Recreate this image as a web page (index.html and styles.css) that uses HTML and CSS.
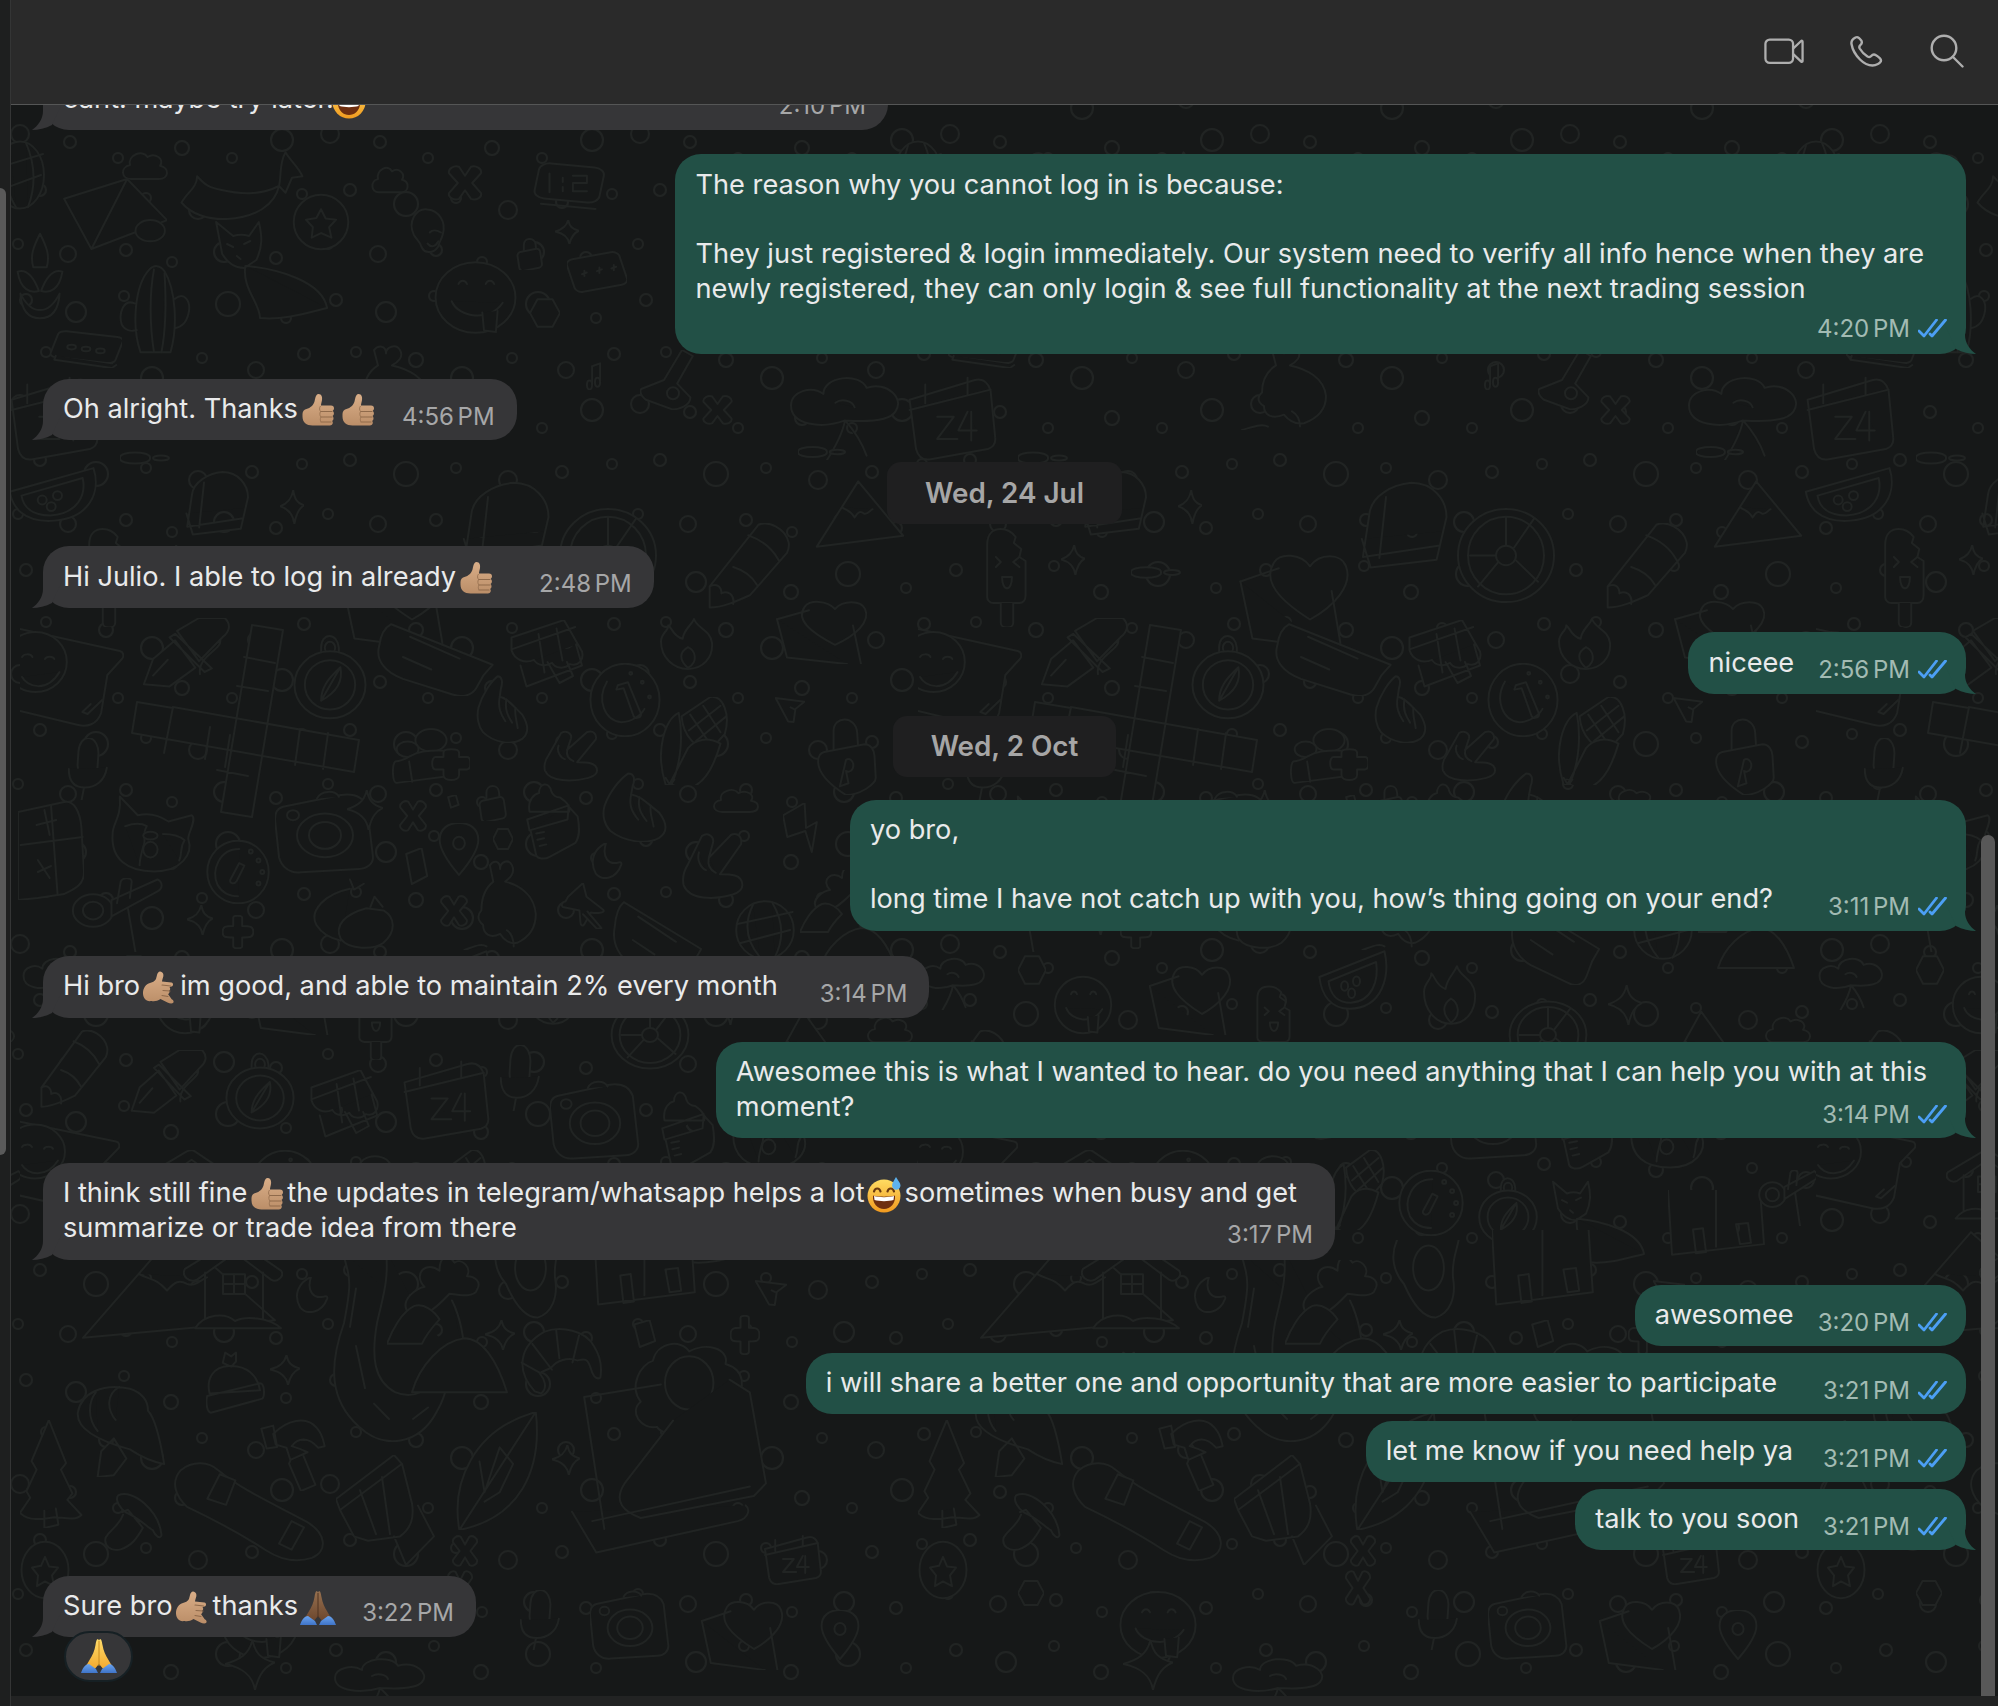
FILE: index.html
```html
<!DOCTYPE html>
<html lang="en">
<head>
<meta charset="utf-8">
<title>Chat</title>
<link rel="stylesheet" href="styles.css">
</head>
<body>
<svg class="defs" width="0" height="0" aria-hidden="true">
  <defs>
    <linearGradient id="skin" x1="0" y1="0" x2="0" y2="1"><stop offset="0" stop-color="#d9ae88"/><stop offset="1" stop-color="#bb8e68"/></linearGradient>
    <linearGradient id="brown" x1="0" y1="0" x2="0" y2="1"><stop offset="0" stop-color="#96704f"/><stop offset="1" stop-color="#6b452c"/></linearGradient>
    <linearGradient id="gold" x1="0" y1="0" x2="0" y2="1"><stop offset="0" stop-color="#ffdc6a"/><stop offset="1" stop-color="#f3a72c"/></linearGradient>
    <linearGradient id="face" x1="0" y1="0" x2="0" y2="1"><stop offset="0" stop-color="#ffdc62"/><stop offset="1" stop-color="#f19a1f"/></linearGradient>
    <linearGradient id="sleeve" x1="0" y1="0" x2="0" y2="1"><stop offset="0" stop-color="#6aa3ee"/><stop offset="1" stop-color="#3f74c8"/></linearGradient>
    <symbol id="e-thumb" viewBox="0 0 33 36">
      <path d="M1 21c0-3 2-4.500 4-5 4-1 7-4 8-7.500.8-2.500.8-7 4-7.500 3 0 4 3 3.500 6-.3 2-1 4-1 5.500h10c2 0 3 1.200 3 2.800 0 1-.5 2-1.300 2.600.8.500 1.200 1.500 1.200 2.500s-.6 2-1.400 2.600c.7.500 1 1.400 1 2.400s-.6 2-1.400 2.500c.5.500.7 1.100.7 1.900 0 1.600-1.300 2.700-3 2.700H11c-6 0-10-3-10-9z" fill="url(#skin)"/>
      <path d="M19 18.500h11.500M19.500 24h11M19.500 29h10" stroke="#8f6a4b" stroke-width="1.100" stroke-linecap="round" fill="none"/>
      <path d="M19 13c-1.500 2-1 4 0 5.500-1 2-.8 4 .5 5.500-1 2-.8 3.500 0 5" stroke="#9c7554" stroke-width="1" fill="none"/>
    </symbol>
    <symbol id="e-shaka" viewBox="0 0 36 36">
      <path d="M1 23c0-5 3-9 7-10 3-.7 5-2 6-4 1-3 1-7 4-7.500 3 .3 4 3 3 6-.4 1.500-1 3-1 4l9.500 1c2 .5 2 3.500 0 4l-2 .5c1 1 1 3-.5 3.500 1 1 .5 3-1 3.500l3.500 5c1.500 1 3 2.500 1.500 4-1 .7-3.500.5-5.500-.5l-7-3.500c-3 2-6 2.500-9 2C4 32 1 28 1 23z" fill="url(#skin)"/>
      <path d="M20 15l8.500 1M21 20.500l7 .5M20 25.500l6 1" stroke="#8f6a4b" stroke-width="1.100" stroke-linecap="round" fill="none"/>
    </symbol>
    <symbol id="e-sweat" viewBox="0 0 36 36">
      <circle cx="17" cy="19" r="16.500" fill="url(#face)"/>
      <path d="M6 18.500c3 1.500 19 1.500 22 0 .7 8-4.500 13.500-11 13.500S5.300 26.500 6 18.500z" fill="#6e2f10"/>
      <path d="M7 19c4 1.500 16 1.500 20 0l-.5 4c-5 1.500-14 1.500-19 0z" fill="#fff"/>
      <path d="M7 14.500c1-4 5.500-4 6.500 0M20.500 14.500c1-4 5.500-4 6.500 0" stroke="#6b3a10" stroke-width="2.200" fill="none" stroke-linecap="round"/>
      <path d="M29 0c2 3.500 4.500 6 4.500 8.500a4.200 4.200 0 0 1-8.400 0c0-2.500 1.900-5 3.900-8.500z" fill="#5db2ee"/>
    </symbol>
    <symbol id="e-pray-brown" viewBox="0 0 36 36">
      <path d="M17 1c-1.500 0-2 3-2.500 6-1 6-3 10-6 15l-3.500 6 8 4 4.500-5.500h1L23 32l8-4-3.500-6c-3-5-5-9-6-15-.5-3-1-6-2.500-6l-1 1.500z" fill="url(#brown)"/>
      <path d="M18 3v25" stroke="#4f3320" stroke-width="1"/>
      <path d="M0 35c2-6 5-9 8-9l7 5 2 4zM36 35c-2-6-5-9-8-9l-7 5-2 4z" fill="url(#sleeve)"/>
    </symbol>
    <symbol id="e-pray-gold" viewBox="0 0 36 36">
      <path d="M17 1c-1.500 0-2 3-2.500 6-1 6-3 10-6 15l-3.500 6 8 4 4.500-5.500h1L23 32l8-4-3.500-6c-3-5-5-9-6-15-.5-3-1-6-2.500-6l-1 1.500z" fill="url(#gold)"/>
      <path d="M18 3v25" stroke="#c98a20" stroke-width="1"/>
      <path d="M0 35c2-6 5-9 8-9l7 5 2 4zM36 35c-2-6-5-9-8-9l-7 5-2 4z" fill="url(#sleeve)"/>
    </symbol>
    <symbol id="ticks" viewBox="0 0 29 19">
      <path d="M1 12l5 5L18.500 1M12 15l2 2L27.500 1" fill="none" stroke="#4c9ff5" stroke-width="2.800" stroke-linecap="round" stroke-linejoin="round"/>
    </symbol>

    <pattern id="rings" patternUnits="userSpaceOnUse" width="310" height="270" x="6" y="12">
      <circle cx="20" cy="18" r="6"/><circle cx="70" cy="30" r="10"/><circle cx="118" cy="14" r="5"/><circle cx="165" cy="40" r="7"/><circle cx="222" cy="22" r="12"/><circle cx="280" cy="36" r="5"/>
      <circle cx="40" cy="70" r="5"/><circle cx="100" cy="78" r="7"/><circle cx="146" cy="96" r="11"/><circle cx="196" cy="76" r="5"/><circle cx="250" cy="88" r="8"/><circle cx="298" cy="72" r="6"/>
      <circle cx="14" cy="122" r="9"/><circle cx="64" cy="130" r="6"/><circle cx="112" cy="146" r="5"/><circle cx="176" cy="136" r="7"/><circle cx="226" cy="146" r="5"/><circle cx="276" cy="128" r="11"/>
      <circle cx="34" cy="178" r="6"/><circle cx="90" cy="192" r="12"/><circle cx="140" cy="186" r="5"/><circle cx="192" cy="198" r="9"/><circle cx="246" cy="190" r="6"/><circle cx="296" cy="182" r="5"/>
      <circle cx="12" cy="232" r="5"/><circle cx="62" cy="242" r="8"/><circle cx="120" cy="238" r="6"/><circle cx="166" cy="250" r="5"/><circle cx="218" cy="240" r="10"/><circle cx="270" cy="246" r="6"/>
    </pattern>

    <!-- wallpaper doodles -->
    <symbol id="d-globe" viewBox="0 0 100 100" preserveAspectRatio="none"><circle cx="50" cy="50" r="48"/><path d="M4 40l92-20M8 72l84-22M30 8c-15 30-12 60 12 88M62 4c18 30 20 62 4 92"/></symbol>
    <symbol id="d-cloud" viewBox="0 0 100 100" preserveAspectRatio="none"><path d="M22 85C2 85 0 55 20 50 15 25 45 10 55 30c15-12 35 5 25 22 20 5 18 33-2 33z"/></symbol>
    <symbol id="d-whale" viewBox="0 0 100 100" preserveAspectRatio="none"><path d="M5 70c5-15 12-20 12-35 6 12 10 15 18 18 15 6 30 8 45-5-3 25-18 42-40 44C25 93 12 85 5 70zM80 48c2-15 0-30 5-45 4 12 10 20 13 32l-8 2-5 20z"/></symbol>
    <symbol id="d-clock" viewBox="0 0 100 100" preserveAspectRatio="none"><rect x="8" y="14" width="84" height="68" rx="14" transform="rotate(8 50 50)"/><path d="M25 30v36M42 38v8M42 56v8M55 34h18v14H55v16h18" /><path d="M14 88l70 10"/></symbol>
    <symbol id="d-mega" viewBox="0 0 100 100" preserveAspectRatio="none"><path d="M2 30l60-26 38 54-72 38zM62 4L28 96"/><ellipse cx="84" cy="72" rx="14" ry="14"/></symbol>
    <symbol id="d-starcircle" viewBox="0 0 100 100" preserveAspectRatio="none"><circle cx="50" cy="50" r="47"/><path d="M50 28l8 16 18 2-12 13 4 18-18-8-16 8 2-18-12-13 18-3z"/></symbol>
    <symbol id="d-man" viewBox="0 0 100 100" preserveAspectRatio="none"><path d="M20 55C5 30 25 5 50 8c25 2 42 22 34 45-3 10-8 14-10 22-8 12-30 16-38 0-2-8-10-12-16-20z"/><path d="M55 50c5-5 15-5 25 0M50 70c8 8 18 6 24-4"/></symbol>
    <symbol id="d-fox" viewBox="0 0 100 100" preserveAspectRatio="none"><path d="M5 2l14 14c5-2 8-2 13 0L40 2c3 15 3 25-2 38l-10 8c-8 0-14-6-18-14zM30 46c25 3 62 15 66 42M96 88c-20 6-35 12-55 10 0-15-15-30-12-52"/><path d="M14 24l5 3M28 24l5-3M22 36l3 3"/></symbol>
    <symbol id="d-smile" viewBox="0 0 100 100" preserveAspectRatio="none"><circle cx="50" cy="50" r="47"/><path d="M30 32c2-6 8-6 10 0M62 32c2-6 8-6 10 0M22 55c8 22 45 28 60 2"/><path d="M58 70l2 24 14 2 2-28"/></symbol>
    <symbol id="d-cactus" viewBox="0 0 100 100" preserveAspectRatio="none"><path d="M30 98C18 70 22 25 42 8c6-5 14-5 20 2 15 20 18 60 8 88zM22 45C8 40 0 55 5 68c4 6 12 8 20 6M76 40c12-8 22 2 18 16-3 10-8 14-18 16"/><path d="M48 8c-6 25-6 60 0 90M62 12c2 25 2 60-4 86"/></symbol>
    <symbol id="d-candle" viewBox="0 0 100 100" preserveAspectRatio="none"><path d="M50 2c12 15 18 25 12 38H38c-6-13 0-23 12-38zM10 45c15-3 28 5 38 22C32 70 15 65 10 45zM90 45c-15-3-28 5-38 22 16 3 33-2 38-22zM15 70c20 25 50 25 70 0-2 20-15 28-35 28S17 90 15 70z"/></symbol>
    <symbol id="d-stars" viewBox="0 0 100 100" preserveAspectRatio="none"><rect x="5" y="12" width="90" height="76" rx="12" transform="rotate(-14 50 50)"/><path d="M25 55l8-4M29 47l0 12M50 48l8-4M54 40l0 12M74 42l8-4M78 34l0 12"/></symbol>
    <symbol id="d-dots" viewBox="0 0 100 100" preserveAspectRatio="none"><rect x="4" y="10" width="92" height="70" rx="10" transform="rotate(12 50 50)"/><circle cx="30" cy="45" r="6"/><circle cx="50" cy="50" r="6"/><circle cx="70" cy="55" r="6"/><path d="M8 68l-2 10 80 22 6-8"/></symbol>
    <symbol id="d-star" viewBox="0 0 100 100" preserveAspectRatio="none"><path d="M55 0c5 25 15 38 45 45-20 8-32 22-40 55C55 70 35 55 0 48 30 40 48 28 55 0z"/></symbol>
    <symbol id="d-lock" viewBox="0 0 100 100" preserveAspectRatio="none"><path d="M28 38V22c0-25 40-25 42-2l2 18"/><rect x="8" y="38" width="82" height="60" rx="12" transform="rotate(-10 50 68)"/></symbol>
    <symbol id="d-bigLock" viewBox="0 0 100 100" preserveAspectRatio="none"><path d="M30 42V18c0-20 36-20 38 2l2 24"/><path d="M15 45L80 35c10 0 16 8 16 15l2 28c0 8-25 22-48 22C30 90 6 75 5 58c0-6 3-12 10-13z"/><path d="M50 55a8 8 0 1 1 0 14l4 16-14 4z"/></symbol>
    <symbol id="d-flower" viewBox="0 0 100 100" preserveAspectRatio="none"><path d="M50 55C30 65 5 60 5 38 5 22 22 15 32 25 32 5 62 0 68 18 85 10 100 30 92 45c-5 10-22 12-42 10zM50 55c-2 15-8 30-15 45M50 55c8 12 14 25 18 40"/><path d="M42 35c5-5 14-3 16 5"/></symbol>
    <symbol id="d-calendar" viewBox="0 0 100 100" preserveAspectRatio="none"><path d="M5 28L75 5c10-3 15 2 18 12l5 55c1 8-3 12-8 14l-62 12c-10 2-14-4-16-12z"/><path d="M22 10v22M68 2v20M5 40l88-24M35 48h18l-18 26h22M68 42l-10 22h20M72 42v34"/></symbol>
    <symbol id="d-note" viewBox="0 0 100 100" preserveAspectRatio="none"><circle cx="22" cy="82" r="16"/><path d="M38 82V15l50-10v65"/><circle cx="72" cy="72" r="16"/></symbol>
    <symbol id="d-x" viewBox="0 0 100 100" preserveAspectRatio="none"><path d="M35 5l15 25L65 5c12-5 28 5 25 18L68 50l22 28c3 12-12 22-25 16L50 70 35 94c-12 6-28-4-25-16l22-28L10 23C7 10 23 0 35 5z"/></symbol>
    <symbol id="d-plus" viewBox="0 0 100 100" preserveAspectRatio="none"><path d="M35 8c0-8 28-8 28 0v24c25 0 35 2 35 18s-10 16-35 16v26c0 8-28 8-28 0V66C10 66 2 66 2 50s8-18 33-18z"/></symbol>
    <symbol id="d-mountain" viewBox="0 0 100 100" preserveAspectRatio="none"><path d="M2 98L48 2l50 80zM30 40c6 6 8 3 14 15 4-8 6-10 10-6 4 3 6-3 10-6"/></symbol>
    <symbol id="d-pop" viewBox="0 0 100 100" preserveAspectRatio="none"><path d="M18 68V18C18 5 30 2 40 2c12 0 18 3 24 8l-3 6 12 6-3 8 10 4v34c0 5-4 8-10 8H28c-6 0-10-3-10-6z"/><path d="M40 76v20c0 6 20 6 20 0V76M32 30l8 5-8 5M70 30l-10 5 10 5M42 50c0 15 16 15 16 0z"/></symbol>
    <symbol id="d-wheel" viewBox="0 0 100 100" preserveAspectRatio="none"><ellipse cx="50" cy="50" rx="48" ry="48"/><ellipse cx="50" cy="50" rx="38" ry="40"/><circle cx="50" cy="50" r="10"/><path d="M50 10v30M14 50h26M60 55l22 22M42 57L22 82M58 42l20-30"/></symbol>
    <symbol id="d-pencil" viewBox="0 0 100 100" preserveAspectRatio="none"><path d="M2 96V72L60 2c12-5 32 4 36 20 1 5 0 8-2 12L50 82c-14 6-32 14-48 14zM2 72c8-4 14 0 14 8 8-4 16 2 14 12M48 14c15 5 28 14 36 28M30 50c10 3 22 10 28 20"/></symbol>
    <symbol id="d-heartnote" viewBox="0 0 100 100" preserveAspectRatio="none"><path d="M2 30l32-14M60 70c-25-20-40-40-30-60 5-10 22-10 30 4 8-14 26-14 30 0 6 20-10 42-30 56z"/><path d="M2 30l10 60 60 10M78 40l8 60"/></symbol>
    <symbol id="d-melon" viewBox="0 0 100 100" preserveAspectRatio="none"><path d="M2 45L95 2c8 40-2 95-50 96C18 98 5 75 2 45z"/><path d="M15 52l68-32c4 30-5 65-36 68-20 0-30-15-32-36z"/><ellipse cx="38" cy="60" rx="5" ry="8"/><ellipse cx="55" cy="52" rx="5" ry="8"/><ellipse cx="48" cy="72" rx="5" ry="8"/></symbol>
    <symbol id="d-nib" viewBox="0 0 100 100" preserveAspectRatio="none"><path d="M2 92l10-35 24-26 22 38-28 26zM12 80l16-22M30 27l38 48 8-5-40-48zM38 18L62 0h28c8 10 4 20-2 26L62 60zM85 30c3 14-25 22-22 48"/></symbol>
    <symbol id="d-tablet" viewBox="0 0 100 100" preserveAspectRatio="none"><path d="M0 2l96 22c4 1 4 6 2 8L84 48l-6 38c-4 12-14 14-22 12L0 84"/><circle cx="15" cy="35" r="30"/><path d="M2 30c1-3 8-4 10 0M24 32c1-3 8-3 9 0M2 50c5 10 24 16 36-5M60 85l8-8M60 85l5 2 14-14"/></symbol>
    <symbol id="d-compass" viewBox="0 0 100 100" preserveAspectRatio="none"><path d="M38 28V18c0-18 22-18 24 0v10"/><ellipse cx="50" cy="18" rx="7" ry="7"/><ellipse cx="50" cy="60" rx="48" ry="38"/><ellipse cx="50" cy="60" rx="34" ry="28"/><path d="M38 78c0-14 8-24 26-38 4 16-4 28-26 38zM38 78l26-38"/></symbol>
    <symbol id="d-notepad" viewBox="0 0 100 100" preserveAspectRatio="none"><path d="M12 8L98 60l-8 14-6 16c-4 10-12 12-20 8L22 78C8 70-2 55 2 35c1-12 4-22 10-27zM28 24l42 28M22 50l24 16"/></symbol>
    <symbol id="d-shop" viewBox="0 0 100 100" preserveAspectRatio="none"><path d="M2 25L72 0l24 45c3 12-5 22-16 18-8 8-20 6-24-2-8 6-20 4-24-4-12 6-26 0-30-14zM14 65l8 30 74-30-8-30M38 20l8 55M62 12l8 46M2 42l85-32M50 60l16 30 18-10-8-20"/></symbol>
    <symbol id="d-flame" viewBox="0 0 100 100" preserveAspectRatio="none"><path d="M10 45c0 30 20 53 45 53s42-22 40-50C92 22 70 20 65 2 60 15 48 22 46 40 30 35 28 18 22 14c2 10-12 14-12 31z"/><path d="M55 96c-15-15-15-30 0-40 12 6 18 28 0 40z"/></symbol>
    <symbol id="d-coin" viewBox="0 0 100 100" preserveAspectRatio="none"><ellipse cx="50" cy="50" rx="48" ry="49"/><path d="M25 25C10 50 22 78 45 80c14 0 28-10 32-18M40 30l14-4 18 42c2 6-8 8-10 4L48 34l-10 2z"/><circle cx="58" cy="14" r="2"/><circle cx="74" cy="26" r="2"/><circle cx="84" cy="46" r="2"/></symbol>
    <symbol id="d-corn" viewBox="0 0 100 100" preserveAspectRatio="none"><path d="M30 22l40-22c18-2 28 20 20 42L70 60c-18 0-38-15-40-38zM42 20l28 34M60 10l24 30M40 38L84 10M50 50L92 22"/><path d="M8 100C-8 60 8 25 26 18c6 25 4 55-10 82zM14 98c20 10 50 12 70-45-18-8-35-5-45 5zM8 92l6 8 6-6"/></symbol>
    <symbol id="d-thumb" viewBox="0 0 100 100" preserveAspectRatio="none"><path d="M8 48C15 28 30 10 42 2c8 0 10 8 6 18l-2 12c14 2 24 14 40 26 12 16 12 28 0 36-18 10-50 6-70-10C8 76 4 62 8 48z"/><path d="M46 32c-4 16 2 26 10 36M58 36c-4 16 4 26 10 34M74 48c-2 10 2 18 4 30"/></symbol>
    <symbol id="d-rock" viewBox="0 0 100 100" preserveAspectRatio="none"><path d="M14 48L34 6c8-6 18 0 16 10l-6 22 32-34c10-4 16 4 14 14L60 62c14 0 32 0 32 16 0 8-8 12-14 14-26 8-62 8-70-14-2-10 0-20 6-30z"/><path d="M30 30c-4 12 4 24 10 26M44 38c-2 10 2 18 10 22"/></symbol>
    <symbol id="d-people" viewBox="0 0 100 100" preserveAspectRatio="none"><circle cx="50" cy="22" r="20"/><circle cx="20" cy="38" r="14"/><path d="M4 60c16-2 18-14 36-18 18-3 40-2 44 4v38L6 98C0 98 0 66 4 60zM22 60l4 36"/><path d="M66 44c0-8 20-8 20 0v8h10c6 0 6 22 0 22H86v10c0 12-20 12-20 0V74H56c-6 0-6-22 0-22h10z"/></symbol>
    <symbol id="d-mic" viewBox="0 0 100 100" preserveAspectRatio="none"><rect x="25" y="0" width="50" height="68" rx="24" transform="rotate(6 50 34)"/><path d="M2 50c0 20 15 30 40 30 25 0 50-10 55-32M40 80l-6 20"/></symbol>
    <symbol id="d-calc" viewBox="0 0 100 100" preserveAspectRatio="none"><path d="M0 12L70 2c15-2 24 10 26 25l4 45c0 15-20 18-30 22L30 98 0 100z"/><path d="M4 45l94-8M50 5l10 90M28 25l30-5M40 10l8 25M30 72l20-6M30 60l18 18"/></symbol>
    <symbol id="d-cat" viewBox="0 0 100 100" preserveAspectRatio="none"><path d="M12 2l20 24c14-4 24 0 34 8l26-8c6 5-4 22-4 30 6 20-8 42-38 42C20 98 2 82 4 50c0-15 10-20 8-48z"/><path d="M18 40c10-4 18-4 24 0-6 10 0 18-4 26-2 10-4 16-4 24M60 50c10 0 18 2 24 8-6 10-2 16-6 26"/><ellipse cx="46" cy="52" rx="8" ry="5"/><ellipse cx="46" cy="70" rx="8" ry="10"/></symbol>
    <symbol id="d-camera" viewBox="0 0 100 100" preserveAspectRatio="none"><path d="M8 20L66 6c12-2 22 2 26 14l6 60c0 8-6 14-14 14L26 98C14 100 6 90 4 80L0 35c0-8 2-13 8-15z"/><ellipse cx="50" cy="54" rx="28" ry="26"/><ellipse cx="50" cy="54" rx="16" ry="16"/><circle cx="18" cy="30" r="6"/><path d="M42 10c4-10 18-10 22-2"/></symbol>
    <symbol id="d-gauge" viewBox="0 0 100 100" preserveAspectRatio="none"><ellipse cx="50" cy="50" rx="48" ry="49"/><path d="M52 14C20 14 8 48 18 70c8 14 22 18 32 18M52 36l-14 26c-2 6 6 8 10 2l12-24z"/><circle cx="70" cy="18" r="3"/><circle cx="82" cy="32" r="3"/><circle cx="88" cy="50" r="3"/><circle cx="82" cy="68" r="3"/></symbol>
    <symbol id="d-pin" viewBox="0 0 100 100" preserveAspectRatio="none"><path d="M50 98C20 70 4 50 4 32 4 10 25 0 50 0s46 10 46 32c0 18-16 38-46 66z"/><ellipse cx="50" cy="38" rx="14" ry="12"/></symbol>
    <symbol id="d-bottle" viewBox="0 0 100 100" preserveAspectRatio="none"><path d="M8 38C4 22 18 15 25 14c0-12 18-16 22-2 2 4 8 8 16 8 10 5 18 10 16 18zM4 48l74-18-2 18L8 62zM10 62l10 32c2 4 14 6 24 2l46-18c8-8 8-18 4-34l-18-14"/><path d="M20 66l14-2M22 74l12-2M26 82l12-2"/></symbol>
    <symbol id="d-moon" viewBox="0 0 100 100" preserveAspectRatio="none"><path d="M50 0C15 15 0 50 20 85c20 22 60 15 75-25 2-6-4-8-8-6-30 8-50-15-37-54z"/></symbol>
    <symbol id="d-plane" viewBox="0 0 100 100" preserveAspectRatio="none"><path d="M2 4l96 14-30 28-6 50-18-2zM62 46l-10-6"/></symbol>
    <symbol id="d-bolt" viewBox="0 0 100 100" preserveAspectRatio="none"><path d="M0 25L60 0l4 50 30-12-14 60-18-42-50 12z"/></symbol>
    <symbol id="d-dumpling" viewBox="0 0 100 100" preserveAspectRatio="none"><path d="M45 15C15 22-5 45 4 65c8 15 22 20 30 22"/><path d="M65 42C40 50 25 65 34 85c10 15 40 15 52 5 15-15 15-35 0-45zM45 2l5 14 12-8M70 40l5-14 10 14"/></symbol>
    <symbol id="d-girl" viewBox="0 0 100 100" preserveAspectRatio="none"><path d="M34 6c4-6 12-6 12 4 0-8 10-12 14-4 4 8-2 14-8 18 16 4 34 14 36 36 0 16-8 26-22 32-10 2-16-4-20-10-12 6-20 0-20-10-8-6-6-12-2-16 0-16 6-26 14-32zM30 96c-6-4-14 0-26 4M62 96c0-8-2-14-8-18"/></symbol>
    <symbol id="d-pushpin" viewBox="0 0 100 100" preserveAspectRatio="none"><path d="M50 0l8 30 38 28c6 8-16 8-28 6l-14 24c-4 8-10 4-10-4l-2-24-38-8c-6-6 2-12 6-12l6-10z"/><path d="M60 62l32 36-10 2-32-32"/></symbol>
    <symbol id="d-key" viewBox="0 0 100 100" preserveAspectRatio="none"><ellipse cx="24" cy="44" rx="22" ry="22"/><ellipse cx="24" cy="44" rx="11" ry="12"/><path d="M44 30L94 2c6 4 6 12 0 16L44 52zM50 34L54 5c2-6 12-6 12 0l-2 22M62 42l8 58"/></symbol>
    <symbol id="d-house" viewBox="0 0 100 100" preserveAspectRatio="none"><path d="M2 32L46 2c4-2 8-2 10 0l42 32c4 6-4 14-10 10L52 14 14 44C6 48-2 40 2 32zM22 36v52M80 36v52M12 98c10-16 30-18 40-8 10-6 34-4 46 8z"/><rect x="40" y="38" width="22" height="22"/><path d="M51 38v22M40 49h22"/></symbol>
    <symbol id="d-road" viewBox="0 0 100 100" preserveAspectRatio="none"><path d="M8 0c8 14 6 22 2 38C0 60 0 78 20 92c16 12 40 10 52-8 6-8 10-20 8-34M38 0c2 16-2 24-6 38-4 18-2 30 12 36 12 4 24 0 34-14M18 20l-4 20M18 50l6 22M30 80l10 8M56 88l10-6"/></symbol>
    <symbol id="d-island" viewBox="0 0 100 100" preserveAspectRatio="none"><path d="M50 25C40 35 28 45 18 40 8 30 25 20 30 20 20 10 32 0 42 8c0-10 6-14 12-6 6-4 14 4 10 10 6 0 12 4 8 10-2 6-14 4-22 3zM52 30c8 15 10 30 10 45"/><path d="M0 62c4-10 12-24 22-28 8-2 16 4 20 10-8 8-12 14-14 18zM20 98c6-20 24-38 42-40 14 0 26 16 34 40z"/></symbol>
    <symbol id="d-egg" viewBox="0 0 100 100" preserveAspectRatio="none"><path d="M10 0C0 20 5 40 20 55c10 20 25 42 45 42 20-5 30-25 25-50C88 25 95 15 98 0"/><ellipse cx="55" cy="35" rx="22" ry="28"/></symbol>
    <symbol id="d-building" viewBox="0 0 100 100" preserveAspectRatio="none"><path d="M0 0l4 98 92-16L92 0M25 60l10-2 3 36-10 2zM48 0v86M68 52l12-2 3 30-11 2z"/></symbol>
    <symbol id="d-croissant" viewBox="0 0 100 100" preserveAspectRatio="none"><path d="M18 88C-5 60-2 25 30 5c20-8 50-2 60 20 8 14 10 30 8 44-6 4-10-5-12-14-4-14-8-12-16-10C58 40 45 45 38 55c-6 4-12 5-14 8 6 8 10 20 2 28z"/><path d="M15 22l24 36M44 2l4 40M72 10L64 48M2 48l22 14"/></symbol>
    <symbol id="d-hat" viewBox="0 0 100 100" preserveAspectRatio="none"><path d="M32 4l10 6 8-6v14l-8 8-14-6zM6 68C0 45 12 26 38 25c30-2 48 15 52 38zM2 72l88-20c8 0 8 20 4 24L8 98C0 96 0 78 2 72z"/></symbol>
    <symbol id="d-shrimp" viewBox="0 0 100 100" preserveAspectRatio="none"><path d="M60 70C30 62 0 50 2 30 6 8 30-2 60 4c18 6 20 18 20 24 8 8 14 34 18 58-20-4-32-12-38-16zM28 72l-4 28 18-2 14-18-14-22zM22 8c-8 10-10 28 2 42M48 2c-14 8-14 24-4 36"/></symbol>
    <symbol id="d-tree" viewBox="0 0 100 100" preserveAspectRatio="none"><path d="M45 0L72 40l-8 6 18 22-8 6 22 14c-10 6-30 2-42 2-20 2-40 4-54-4l16-14-6-6 16-20-8-8zM38 84v16l22-3-4-15"/></symbol>
    <symbol id="d-hammer" viewBox="0 0 100 100" preserveAspectRatio="none"><path d="M2 18l18-4 6 28-16 2zM20 25c20-18 50-25 66-8 10 10 10 18 12 24l-10 2c-14-14-30-14-40-2 8 2 14 4 24 8l-26 10-6-16-16-4zM46 60l-2 4 18 36 22-8-18-38"/></symbol>
    <symbol id="d-snow" viewBox="0 0 100 100" preserveAspectRatio="none"><path d="M5 8c8-10 18-8 24 0 16 20 34 32 56 50 14 12 14 30 4 36-12 6-22 0-30-8-16-16-28-26-50-42C2 34-2 20 5 8z"/><path d="M22 36l12 6 6-24-10-6zM68 80l8 6 8-22-8-6z"/></symbol>
    <symbol id="d-mushroom" viewBox="0 0 100 100" preserveAspectRatio="none"><path d="M26 4C50-8 92 30 96 70c-2 8-10 2-14-8-8-4-24-22-44-30-8-6-18-20-12-28zM32 32l10-4 24 30c-10 18-18 30-36 36-15 4-28-6-24-20 10-16 22-20 28-38"/></symbol>
    <symbol id="d-drum" viewBox="0 0 100 100" preserveAspectRatio="none"><path d="M0 40L58 0l8 8L4 50zM4 50l14 24 14 4 32-4c12-8 14-18 12-30L66 8M24 32l16 40M46 20l8 52M58 74l12 26 28-26-16-28"/></symbol>
    <symbol id="d-surf" viewBox="0 0 100 100" preserveAspectRatio="none"><path d="M4 100C-6 60 20 15 95 0c8 50-20 90-91 100zM4 100L95 0M28 42l6 26 18-38 16 14-16 24-18 8"/></symbol>
    <symbol id="d-woman" viewBox="0 0 100 140" preserveAspectRatio="none"><path d="M42 12c2-12 14-14 18-6 8-6 20-2 18 8 10 4 10 16 4 22 8 8 2 20-6 18-4 8-28 8-32 0-8 2-14-10-8-16-6-10 0-24 6-26z"/><ellipse cx="60" cy="26" rx="12" ry="17"/><path d="M8 35l38-8M8 35l10 84M52 50l-24 40c-6 12 0 18 8 22l56-14 6-8-8-58-10-8M90 92l-78 22M2 108l12 26 70-20c6-2 6-8 4-10"/></symbol>
    <symbol id="d-backpack" viewBox="0 0 100 100" preserveAspectRatio="none"><path d="M15 35c2-18 20-30 38-32 20 0 32 18 32 36l-6 30-70 12zM8 62l8 30 60-8 6-30M30 18L24 82"/></symbol>
    <symbol id="d-flask" viewBox="0 0 100 100" preserveAspectRatio="none"><path d="M70 0L40 50 2 65c-4 5 2 14 8 18l44 16c10 0 30-6 30-20L62 56l26-46z"/><circle cx="55" cy="72" r="10"/></symbol>
    <symbol id="d-dash" viewBox="0 0 100 100" preserveAspectRatio="none"><rect x="0" y="15" width="60" height="70" rx="30"/><circle cx="82" cy="50" r="16"/></symbol>
    <symbol id="d-hex" viewBox="0 0 100 100" preserveAspectRatio="none"><path d="M25 4h50l25 46-25 46H25L0 50z"/></symbol>
    <symbol id="d-diamond" viewBox="0 0 100 100" preserveAspectRatio="none"><path d="M15 15L70 0l20 70-55 20z"/></symbol>

    <g id="wall-tile">
      <use href="#d-globe" x="-5" y="140" width="50" height="70"/>
      <use href="#d-cloud" x="120" y="145" width="50" height="40"/>
      <use href="#d-whale" x="175" y="150" width="130" height="75"/>
      <use href="#d-x" x="445" y="165" width="40" height="36"/>
      <use href="#d-clock" x="530" y="158" width="78" height="52"/>
      <use href="#d-cloud" x="370" y="160" width="40" height="38"/>
      <use href="#d-mega" x="62" y="176" width="105" height="76"/>
      <use href="#d-starcircle" x="292" y="193" width="58" height="58"/>
      <use href="#d-star" x="555" y="220" width="24" height="24"/>
      <use href="#d-lock" x="516" y="238" width="28" height="32"/>
      <use href="#d-stars" x="567" y="250" width="60" height="44"/>
      <use href="#d-fox" x="210" y="220" width="122" height="100"/>
      <use href="#d-man" x="405" y="205" width="45" height="55"/>
      <use href="#d-smile" x="433" y="260" width="85" height="75"/>
      <use href="#d-cactus" x="118" y="262" width="75" height="92"/>
      <use href="#d-candle" x="12" y="232" width="56" height="88"/>
      <use href="#d-hex" x="530" y="298" width="30" height="30"/>
      <use href="#d-dots" x="50" y="330" width="72" height="38"/>
      <use href="#d-girl" x="340" y="345" width="100" height="85"/>
      <use href="#d-note" x="586" y="362" width="16" height="28"/>
      <use href="#d-x" x="700" y="395" width="35" height="30"/>
      <use href="#d-flower" x="785" y="372" width="120" height="88"/>
      <use href="#d-calendar" x="905" y="376" width="92" height="85"/>
      <use href="#d-flask" x="640" y="350" width="60" height="60"/>
      <use href="#d-melon" x="8" y="467" width="90" height="55"/>
      <use href="#d-backpack" x="180" y="470" width="80" height="70"/>
      <use href="#d-dash" x="120" y="450" width="50" height="16"/>
      <use href="#d-pop" x="78" y="527" width="62" height="100"/>
      <use href="#d-star" x="163" y="545" width="24" height="30"/>
      <use href="#d-star" x="280" y="490" width="24" height="34"/>
      <use href="#d-heartnote" x="340" y="553" width="120" height="95"/>
      <use href="#d-wheel" x="558" y="507" width="100" height="97"/>
      <use href="#d-backpack" x="455" y="480" width="110" height="95"/>
      <use href="#d-pencil" x="708" y="523" width="84" height="88"/>
      <use href="#d-mountain" x="815" y="480" width="90" height="68"/>
      <use href="#d-dash" x="798" y="445" width="48" height="14"/>
      <use href="#d-dash" x="233" y="565" width="50" height="15"/>
      <use href="#d-tablet" x="20" y="627" width="104" height="100"/>
      <use href="#d-nib" x="142" y="618" width="92" height="72"/>
      <use href="#d-compass" x="293" y="632" width="74" height="88"/>
      <use href="#d-notepad" x="377" y="618" width="118" height="78"/>
      <use href="#d-shop" x="510" y="620" width="75" height="70"/>
      <use href="#d-flame" x="655" y="618" width="60" height="52"/>
      <use href="#d-heartnote" x="775" y="600" width="100" height="64"/>
      <path class="d-line" d="M252 625l31 5-31 187-31-5zM173 707l186 33-5 32-222-39 5-31 36 6M244 657l31 6M237 686l31 5M210 727l-5 32M173 707l-9 46M217 770l31 6M300 729l-5 36M328 733l-5 36M230 735l-5 32"/>
      <use href="#d-thumb" x="474" y="675" width="56" height="68"/>
      <use href="#d-coin" x="589" y="663" width="72" height="74"/>
      <use href="#d-corn" x="660" y="697" width="72" height="88"/>
      <use href="#d-plane" x="775" y="697" width="30" height="26"/>
      <use href="#d-people" x="392" y="728" width="78" height="56"/>
      <use href="#d-rock" x="540" y="730" width="62" height="52"/>
      <use href="#d-mic" x="68" y="738" width="40" height="62"/>
      <use href="#d-bigLock" x="815" y="717" width="62" height="78"/>
      <use href="#d-cloud" x="711" y="783" width="50" height="34"/>
      <use href="#d-calc" x="18" y="800" width="66" height="100"/>
      <use href="#d-cat" x="109" y="795" width="90" height="78"/>
      <use href="#d-camera" x="275" y="790" width="100" height="84"/>
      <use href="#d-star" x="347" y="790" width="36" height="40"/>
      <use href="#d-x" x="397" y="800" width="32" height="32"/>
      <use href="#d-diamond" x="446" y="795" width="14" height="14"/>
      <use href="#d-lock" x="478" y="785" width="30" height="36"/>
      <use href="#d-bottle" x="525" y="782" width="56" height="78"/>
      <use href="#d-thumb" x="599" y="772" width="70" height="70"/>
      <use href="#d-bolt" x="783" y="803" width="36" height="50"/>
      <use href="#d-pin" x="438" y="823" width="42" height="53"/>
      <use href="#d-hex" x="493" y="828" width="20" height="22"/>
      <use href="#d-diamond" x="402" y="848" width="28" height="40"/>
      <use href="#d-gauge" x="206" y="840" width="64" height="64"/>
      <use href="#d-moon" x="589" y="843" width="34" height="36"/>
      <use href="#d-rock" x="678" y="832" width="70" height="68"/>
      <use href="#d-island" x="800" y="870" width="100" height="100"/>
      <use href="#d-key" x="71" y="878" width="92" height="74"/>
      <use href="#d-dumpling" x="313" y="878" width="82" height="72"/>
      <use href="#d-girl" x="461" y="860" width="85" height="90"/>
      <use href="#d-pushpin" x="561" y="883" width="44" height="46"/>
      <use href="#d-x" x="438" y="895" width="32" height="32"/>
      <use href="#d-star" x="187" y="905" width="26" height="30"/>
      <use href="#d-plus" x="222" y="915" width="32" height="34"/>
      <use href="#d-notepad" x="613" y="895" width="90" height="90"/>
      <use href="#d-globe" x="735" y="900" width="60" height="60"/>
      <use href="#d-flower" x="20" y="955" width="70" height="55"/>
      <use href="#d-hex" x="120" y="955" width="28" height="30"/>
      <use href="#d-smile" x="155" y="975" width="60" height="60"/>
      <use href="#d-heartnote" x="250" y="965" width="90" height="70"/>
      <use href="#d-pop" x="350" y="985" width="52" height="75"/>
      <use href="#d-melon" x="420" y="950" width="70" height="60"/>
      <use href="#d-flame" x="520" y="965" width="60" height="60"/>
      <use href="#d-wheel" x="610" y="1000" width="80" height="70"/>
      <use href="#d-star" x="710" y="985" width="34" height="40"/>
      <use href="#d-mountain" x="760" y="1010" width="90" height="78"/>
      <use href="#d-cloud" x="865" y="1010" width="50" height="38"/>
      <use href="#d-pencil" x="40" y="1030" width="70" height="80"/>
      <use href="#d-nib" x="130" y="1050" width="80" height="66"/>
      <use href="#d-compass" x="225" y="1050" width="70" height="80"/>
      <use href="#d-shop" x="310" y="1070" width="70" height="70"/>
      <use href="#d-calendar" x="400" y="1060" width="90" height="80"/>
      <use href="#d-mic" x="500" y="1045" width="40" height="66"/>
      <use href="#d-camera" x="550" y="1080" width="90" height="80"/>
      <use href="#d-bottle" x="660" y="1090" width="56" height="80"/>
      <use href="#d-cat" x="730" y="1095" width="84" height="74"/>
      <use href="#d-bolt" x="830" y="1080" width="36" height="50"/>
      <use href="#d-tablet" x="20" y="1120" width="100" height="90"/>
      <use href="#d-house" x="150" y="1150" width="80" height="70"/>
      <use href="#d-coin" x="250" y="1150" width="70" height="70"/>
      <use href="#d-people" x="335" y="1155" width="80" height="58"/>
      <use href="#d-corn" x="430" y="1150" width="60" height="80"/>
      <use href="#d-gauge" x="500" y="1170" width="66" height="66"/>
      <use href="#d-compass" x="580" y="1175" width="60" height="70"/>
      <use href="#d-fox" x="650" y="1180" width="100" height="84"/>
      <use href="#d-building" x="770" y="1190" width="100" height="66"/>
      <use href="#d-key" x="860" y="1170" width="60" height="56"/>
      <use href="#d-mountain" x="79" y="1230" width="200" height="110"/>
      <use href="#d-house" x="183" y="1240" width="100" height="90"/>
      <use href="#d-moon" x="293" y="1277" width="36" height="36"/>
      <use href="#d-road" x="329" y="1250" width="150" height="192"/>
      <use href="#d-island" x="387" y="1260" width="125" height="135"/>
      <use href="#d-egg" x="492" y="1240" width="70" height="80"/>
      <use href="#d-building" x="594" y="1230" width="105" height="76"/>
      <use href="#d-plane" x="755" y="1280" width="32" height="26"/>
      <use href="#d-plus" x="730" y="1315" width="30" height="40"/>
      <use href="#d-croissant" x="520" y="1328" width="82" height="72"/>
      <use href="#d-star" x="485" y="1320" width="30" height="30"/>
      <use href="#d-hat" x="206" y="1350" width="60" height="64"/>
      <use href="#d-star" x="270" y="1355" width="30" height="30"/>
      <use href="#d-diamond" x="630" y="1320" width="28" height="30"/>
      <use href="#d-woman" x="568" y="1342" width="202" height="220"/>
      <use href="#d-shrimp" x="76" y="1385" width="90" height="92"/>
      <use href="#d-hammer" x="260" y="1415" width="66" height="76"/>
      <use href="#d-surf" x="456" y="1412" width="84" height="118"/>
      <use href="#d-star" x="552" y="1445" width="28" height="30"/>
      <use href="#d-tree" x="20" y="1420" width="64" height="108"/>
      <use href="#d-drum" x="336" y="1455" width="100" height="110"/>
      <use href="#d-snow" x="173" y="1462" width="156" height="102"/>
      <use href="#d-mushroom" x="102" y="1493" width="62" height="60"/>
      <use href="#d-x" x="450" y="1535" width="30" height="32"/>
      <use href="#d-calendar" x="762" y="1535" width="60" height="50"/>
      <use href="#d-starcircle" x="20" y="1540" width="50" height="60"/>
      <use href="#d-smile" x="220" y="1590" width="80" height="70"/>
      <use href="#d-star" x="225" y="1640" width="50" height="50"/>
      <use href="#d-flower" x="330" y="1655" width="100" height="60"/>
      <use href="#d-hex" x="120" y="1580" width="26" height="26"/>
      <use href="#d-x" x="445" y="1570" width="30" height="36"/>
      <use href="#d-mic" x="520" y="1590" width="40" height="60"/>
      <use href="#d-camera" x="590" y="1590" width="80" height="70"/>
      <use href="#d-heartnote" x="700" y="1600" width="90" height="70"/>
      <use href="#d-pin" x="820" y="1610" width="40" height="50"/>
    </g>
  </defs>
</svg>

<div class="app">
  <aside class="rail"><div class="rail-thumb"></div></aside>
  <main class="main">
    <header class="topbar">
      <svg class="icon-video" viewBox="0 0 42 28"><rect x="1.500" y="2" width="29" height="24.500" rx="4.500"/><path d="M30.500 11.500L39 3.500c.6-.5 1.500-.2 1.500.7v20.200c0 .9-.9 1.200-1.500.7l-8.500-8"/></svg>
      <svg class="icon-phone" viewBox="0 0 34 32"><path d="M6.500 2.500C4 3.800 2 6 2.500 9c1 6 4.500 11.500 8.500 15.500 3 3 8 6 12.500 6 3.200 0 8.500-2.500 8.500-5 0-2.300-2-3.500-5-5.300-2-1.200-3.500-.7-4.800.8-1 1.200-2.200 1.300-3.700.5-3-1.800-6-5-7.800-8-.8-1.500-.5-2.500.8-3.600 1.200-1 1.700-2.300 1-4C11.200 4 9.500.9 6.500 2.500z"/></svg>
      <svg class="icon-search" viewBox="0 0 34 34"><circle cx="14" cy="14" r="12.300"/><path d="M23 23l9.500 9.500" stroke-linecap="round"/></svg>
    </header>
    <section class="chat">
      <svg class="wall" width="2000" height="1620" viewBox="0 105 2000 1620" aria-hidden="true">
        <rect class="wall-rings" x="0" y="105" width="2000" height="1620" fill="url(#rings)"/>
        <use href="#wall-tile" x="-898"/>
        <use href="#wall-tile"/>
        <use href="#wall-tile" x="898"/>
        <use href="#wall-tile" x="1796"/>
      </svg>
      <div class="thread">
        <div class="bubble in cut"><span class="text">cant! maybe try later.<svg class="emoji"><use href="#e-sweat"/></svg></span><span class="meta">2:10 PM</span><svg class="tail tail-in" viewBox="0 0 32 30"><path d="M12 0v10c0 8-5 15-11 19 6 0 14-1.500 20-5L32 0z"/></svg></div>

        <div class="bubble out new wide-1 stacked"><span class="text">The reason why you cannot log in is because:<br><br>They just registered &amp; login immediately. Our system need to verify all info hence when they are<br>newly registered, they can only login &amp; see full functionality at the next trading session</span><span class="meta">4:20 PM<svg class="tick"><use href="#ticks"/></svg></span><svg class="tail tail-out" viewBox="0 0 32 30"><path d="M20 0v10c0 8 5 15 11 19-6 0-14-1.500-20-5L0 0z"/></svg></div>

        <div class="bubble in new"><span class="text">Oh alright. Thanks<svg class="emoji"><use href="#e-thumb"/></svg><svg class="emoji"><use href="#e-thumb"/></svg></span><span class="meta">4:56 PM</span><svg class="tail tail-in" viewBox="0 0 32 30"><path d="M12 0v10c0 8-5 15-11 19 6 0 14-1.500 20-5L32 0z"/></svg></div>

        <div class="date">Wed, 24 Jul</div>

        <div class="bubble in new"><span class="text">Hi Julio. I able to log in already<svg class="emoji"><use href="#e-thumb"/></svg></span><span class="meta gap-43">2:48 PM</span><svg class="tail tail-in" viewBox="0 0 32 30"><path d="M12 0v10c0 8-5 15-11 19 6 0 14-1.500 20-5L32 0z"/></svg></div>

        <div class="bubble out new"><span class="text">niceee</span><span class="meta">2:56 PM<svg class="tick"><use href="#ticks"/></svg></span><svg class="tail tail-out" viewBox="0 0 32 30"><path d="M20 0v10c0 8 5 15 11 19-6 0-14-1.500-20-5L0 0z"/></svg></div>

        <div class="date">Wed, 2 Oct</div>

        <div class="bubble out new"><span class="text">yo bro,<br><br>long time I have not catch up with you, how’s thing going on your end?</span><span class="meta gap-54">3:11 PM<svg class="tick"><use href="#ticks"/></svg></span><svg class="tail tail-out" viewBox="0 0 32 30"><path d="M20 0v10c0 8 5 15 11 19-6 0-14-1.500-20-5L0 0z"/></svg></div>

        <div class="bubble in new after-tall"><span class="text">Hi bro<svg class="emoji"><use href="#e-shaka"/></svg>im good, and able to maintain 2% every month</span><span class="meta gap-40">3:14 PM</span><svg class="tail tail-in" viewBox="0 0 32 30"><path d="M12 0v10c0 8-5 15-11 19 6 0 14-1.500 20-5L32 0z"/></svg></div>

        <div class="bubble out new overlay"><span class="text">Awesomee this is what I wanted to hear. do you need anything that I can help you with at this<br>moment?</span><span class="meta">3:14 PM<svg class="tick"><use href="#ticks"/></svg></span><svg class="tail tail-out" viewBox="0 0 32 30"><path d="M20 0v10c0 8 5 15 11 19-6 0-14-1.500-20-5L0 0z"/></svg></div>

        <div class="bubble in new overlay"><span class="text">I think still fine<svg class="emoji"><use href="#e-thumb"/></svg>the updates in telegram/whatsapp helps a lot<svg class="emoji"><use href="#e-sweat"/></svg>sometimes when busy and get<br>summarize or trade idea from there</span><span class="meta">3:17 PM</span><svg class="tail tail-in" viewBox="0 0 32 30"><path d="M12 0v10c0 8-5 15-11 19 6 0 14-1.500 20-5L32 0z"/></svg></div>

        <div class="bubble out new"><span class="text">awesomee</span><span class="meta">3:20 PM<svg class="tick"><use href="#ticks"/></svg></span></div>
        <div class="bubble out"><span class="text">i will share a better one and opportunity that are more easier to participate</span><span class="meta gap-44">3:21 PM<svg class="tick"><use href="#ticks"/></svg></span></div>
        <div class="bubble out"><span class="text">let me know if you need help ya</span><span class="meta gap-31">3:21 PM<svg class="tick"><use href="#ticks"/></svg></span></div>
        <div class="bubble out"><span class="text">talk to you soon</span><span class="meta">3:21 PM<svg class="tick"><use href="#ticks"/></svg></span><svg class="tail tail-out" viewBox="0 0 32 30"><path d="M20 0v10c0 8 5 15 11 19-6 0-14-1.500-20-5L0 0z"/></svg></div>

        <div class="bubble in new last"><span class="text">Sure bro<svg class="emoji"><use href="#e-shaka"/></svg>thanks<svg class="emoji"><use href="#e-pray-brown"/></svg></span><span class="meta">3:22 PM</span><svg class="tail tail-in" viewBox="0 0 32 30"><path d="M12 0v10c0 8-5 15-11 19 6 0 14-1.500 20-5L32 0z"/></svg><div class="reaction"><svg class="emoji-r"><use href="#e-pray-gold"/></svg></div></div>
      </div>
      <div class="scroll-thumb"></div>
    </section>
    <footer class="bottombar"></footer>
  </main>
</div>
</body>
</html>
```
FILE: styles.css
```css
* { box-sizing: border-box; }
html, body { margin: 0; padding: 0; }
body {
  width: 1998px;
  height: 1706px;
  overflow: hidden;
  background: #161818;
  font-family: Inter, "Liberation Sans", sans-serif;
  color: #e9eaeb;
}
.defs { position: absolute; }
.app { display: flex; height: 1706px; }
.rail {
  position: relative;
  width: 11px;
  flex: none;
  background: #1e1f1f;
  border-right: 1px solid #343535;
}
.rail-thumb {
  position: absolute;
  left: 0;
  top: 188px;
  width: 6px;
  height: 967px;
  background: #5a5a5a;
  border-radius: 0 6px 6px 0;
}
.main { flex: 1; display: flex; flex-direction: column; min-width: 0; }
.topbar {
  height: 105px;
  flex: none;
  background: #2a2a2a;
  border-bottom: 1px solid #555656;
  display: flex;
  justify-content: flex-end;
  align-items: center;
  padding: 0 34px 2px 0;
  gap: 47px;
  position: relative;
  z-index: 2;
}
.topbar svg { fill: none; stroke: #aeaeae; stroke-width: 2.4; flex: none; }
.icon-video { width: 40px; height: 28px; margin-right: -2px; }
.icon-phone { width: 34px; height: 32px; }
.icon-search { width: 34px; height: 34px; }

.chat { flex: 1; position: relative; overflow: hidden; min-height: 0; }
.wall { position: absolute; left: -11px; top: 0; }
.wall use, .d-line { fill: #161818; stroke: #212423; stroke-width: 2; stroke-linecap: round; stroke-linejoin: round; }
.wall .d-line { fill: none; }
#rings circle { fill: none; stroke: #212423; stroke-width: 2; }
symbol[id^="d-"] * { vector-effect: non-scaling-stroke; }

.thread {
  position: relative;
  display: flex;
  flex-direction: column;
  align-items: flex-start;
  gap: 6.5px;
  padding: 0 32px;
  margin-top: -36.5px;
}
.bubble {
  position: relative;
  display: flex;
  align-items: flex-end;
  gap: 24px;
  padding: 13.4px 22px 13.5px 20px;
  border-radius: 26px;
  font-size: 27.2px;
  line-height: 34.6px;
  white-space: nowrap;
}
.bubble.new { margin-top: 18px; }
.bubble.after-tall { margin-top: 19px; }
.bubble.last { margin-top: 19px; }
.date + .bubble.new { margin-top: 16px; }
.in { background: #363638; }
.out { background: #225046; align-self: flex-end; padding-right: 19px; }
.cut { width: 845px; justify-content: space-between; }
.cut .emoji { margin-left: -4px; }
.text { display: block; }
.meta {
  display: flex;
  align-items: center;
  gap: 8px;
  font-size: 24px;
  word-spacing: -3px;
  line-height: 35px;
  margin-bottom: -7px;
  color: #a6a7a8;
  flex: none;
}
.out .meta { color: #a2bbb3; }
.gap-31 { margin-left: 6px; }
.gap-40 { margin-left: 18px; }
.gap-43 { margin-left: 19px; }
.gap-44 { margin-left: 22px; }
.gap-54 { margin-left: 31px; }
.tick { width: 29px; height: 19px; flex: none; }
.emoji { width: 40px; height: 36px; margin: -6px 0; vertical-align: -5px; }
.date {
  align-self: center;
  margin-top: 15.5px;
  padding: 13.4px 38px 13.5px;
  border-radius: 14px;
  background: #1f1f20;
  color: #a6a6a6;
  font-size: 27.8px;
  line-height: 34.6px;
  font-weight: 600;
}
.stacked { flex-direction: column; gap: 0; }
.stacked .meta { align-self: flex-end; margin-top: 5.2px; margin-bottom: -5.5px; }
.wide-1 { padding-right: 42px; }
.wide-1 .meta { margin-right: -23px; }
.overlay { display: grid; }
.overlay > .text, .overlay > .meta { grid-area: 1 / 1; }
.overlay > .text { margin-right: 20px; }
.overlay.in { padding-bottom: 14.9px; }
.overlay.in > .text { margin-right: 16px; }
.overlay > .meta { justify-self: end; align-self: end; }
.tail { position: absolute; width: 32px; height: 30px; bottom: -1px; }
.tail-in { left: -12px; fill: #363638; }
.tail-out { right: -11px; fill: #225046; }
.reaction {
  position: absolute;
  left: 21px;
  top: 55px;
  width: 69px;
  height: 51px;
  border-radius: 26px;
  background: #363638;
  border: 2px solid #162024;
  display: flex;
  align-items: center;
  justify-content: center;
}
.emoji-r { width: 36px; height: 36px; }
.scroll-thumb {
  position: absolute;
  right: 3px;
  top: 730px;
  width: 14px;
  bottom: 0;
  background: #585858;
  border-radius: 7px 7px 0 0;
}
.bottombar { height: 10px; flex: none; background: #222323; }
```
